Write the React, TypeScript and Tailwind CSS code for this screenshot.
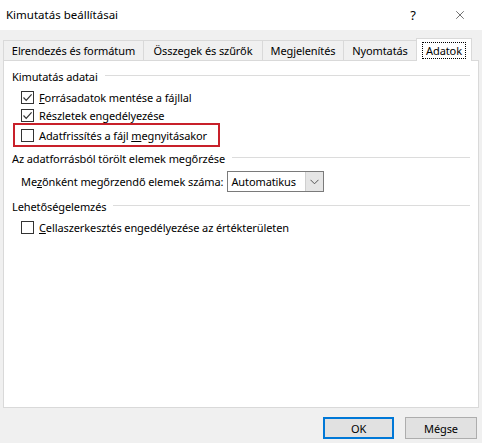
import { X } from "lucide-react";

const font = { fontFamily: '"Segoe UI", "Noto Sans", sans-serif' };

function CheckBox({ checked }: { checked: boolean }) {
  return (
    <span className="flex h-[13px] w-[13px] shrink-0 items-center justify-center border border-[#333333] bg-white">
      {checked && (
        <svg width="11" height="11" viewBox="0 0 11 11" fill="none">
          <path d="M1.5 5.5 L4.2 8.3 L9.6 2.4" stroke="#333333" strokeWidth="1.2" />
        </svg>
      )}
    </span>
  );
}

function Row({ checked, children }: { checked: boolean; children: React.ReactNode }) {
  return (
    <div className="flex h-[18px] items-center gap-[5px] whitespace-nowrap pl-[17px]">
      <CheckBox checked={checked} />
      <span>{children}</span>
    </div>
  );
}

function GroupHeader({ label, className = "" }: { label: string; className?: string }) {
  return (
    <div className={`flex h-[18px] items-center gap-[7px] pl-[8px] pr-[8px] ${className}`}>
      <span className="whitespace-nowrap">{label}</span>
      <span className="mt-[-1px] h-px flex-1 bg-[#dcdcdc]" />
    </div>
  );
}

const tabs = [
  { label: "Elrendezés és formátum", w: "w-[140px]" },
  { label: "Összegek és szűrők", w: "w-[119px]" },
  { label: "Megjelenítés", w: "w-[81px]" },
  { label: "Nyomtatás", w: "w-[73px]" },
];

export default function App() {
  return (
    <div
      className="flex h-[443px] w-[482px] flex-col bg-[#f0f0f0] text-[11px] leading-none tracking-[-0.1px] text-black"
      style={font}
    >
      {/* title bar */}
      <div className="flex h-[30px] items-center bg-white pl-[6px] text-[11.5px] tracking-normal">
        <span className="whitespace-nowrap">Kimutatás beállításai</span>
        <span className="ml-auto mr-[37px] text-[13px]">?</span>
        <X className="mr-[15px] h-[14px] w-[14px] text-[#222]" strokeWidth={1.1} />
      </div>

      {/* tabs */}
      <div className="mt-[7px] flex h-[23px] items-end whitespace-nowrap px-[3px]">
        {tabs.map((t) => (
          <div
            key={t.label}
            className={`flex h-[20px] items-center justify-center border-t border-l border-[#d9d9d9] bg-[#f0f0f0] ${t.w}`}
          >
            {t.label}
          </div>
        ))}
        <div className="relative z-10 mb-[-1px] flex h-[23px] w-[56px] items-center justify-center border-x border-t border-[#d9d9d9] bg-white">
          <span className="border border-dotted border-black px-[3px] py-[2px]">Adatok</span>
        </div>
      </div>

      {/* panel */}
      <div className="mx-[3px] h-[348px] border border-[#d9d9d9] bg-white pt-[6px]">
        <GroupHeader label="Kimutatás adatai" />
        <div className="mt-[3px]">
          <Row checked>
            <span className="underline">F</span>orrásadatok mentése a fájllal
          </Row>
          <Row checked>Részletek engedélyezése</Row>
          <div className="ml-[9px] mt-[-1px] flex h-[24px] w-[207px] items-center border-2 border-[#c8202a] pl-[6px]">
            <div className="flex items-center gap-[5px] whitespace-nowrap">
              <CheckBox checked={false} />
              <span>
                Adatfrissítés a fájl <span className="underline">m</span>egnyitásakor
              </span>
            </div>
          </div>
        </div>

        <GroupHeader label="Az adatforrásból törölt elemek megőrzése" className="mt-[2px]" />
        <div className="mt-[4px] flex items-center whitespace-nowrap pl-[17px]">
          <span className="mr-[4px]">
            Me<span className="underline">z</span>őnként megőrzendő elemek száma:
          </span>
          <div className="flex h-[21px] w-[97px] items-stretch border border-[#7a7a7a] bg-white">
            <span className="flex flex-1 items-center pl-[3px]">Automatikus</span>
            <span className="flex w-[18px] items-center justify-center border-l border-[#cfcfcf] bg-[#e5e5e5]">
              <svg width="9" height="6" viewBox="0 0 9 6" fill="none">
                <path d="M0.5 0.8 L4.5 4.8 L8.5 0.8" stroke="#555" strokeWidth="1" />
              </svg>
            </span>
          </div>
        </div>

        <GroupHeader label="Lehetőségelemzés" className="mt-[5px]" />
        <div className="mt-[3px]">
          <Row checked={false}>
            <span className="underline">C</span>ellaszerkesztés engedélyezése az értékterületen
          </Row>
        </div>
      </div>

      {/* buttons */}
      <div className="mt-[9px] flex justify-end gap-[11px] pr-[5px]">
        <button className="flex h-[22px] w-[71px] items-center justify-center border-2 border-[#0078d7] bg-[#e1e1e1]">
          OK
        </button>
        <button className="flex h-[22px] w-[72px] items-center justify-center border border-[#adadad] bg-[#e1e1e1]">
          Mégse
        </button>
      </div>
    </div>
  );
}
